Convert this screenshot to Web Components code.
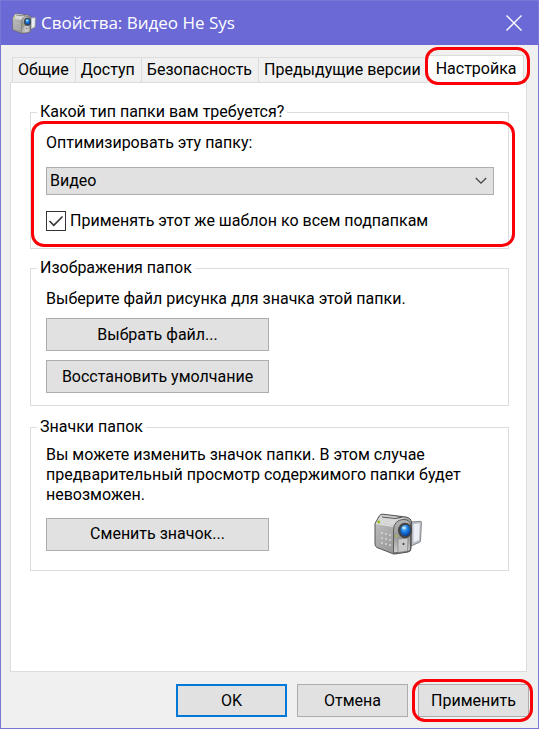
<!DOCTYPE html>
<html lang="ru">
<head>
<meta charset="utf-8">
<meta name="viewport" content="width=device-width, initial-scale=1">
<title>Свойства: Видео Не Sys</title>
<style>
  body {
    margin: 0;
    font: 16px/20px Roboto, "Liberation Sans", Arial, sans-serif;
    color: #000;
  }
  .actions {
    display: grid;
    grid-template-columns: 223px auto;
    justify-content: start;
    align-items: center;
    gap: 105px;
  }
  p {
    margin: 0;
  }
</style>
</head>
<body>

<props-window>
  <camcorder-icon slot="icon" size="24"></camcorder-icon>
  <span slot="title">Свойства: Видео Не Sys</span>

  <tab-strip slot="tabs">
    <tab-item>Общие</tab-item>
    <tab-item>Доступ</tab-item>
    <tab-item>Безопасность</tab-item>
    <tab-item>Предыдущие версии</tab-item>
    <tab-item selected>Настройка</tab-item>
  </tab-strip>

  <group-box label="Какой тип папки вам требуется?" ring>
    <combo-field label="Оптимизировать эту папку:" value="Видео"></combo-field>
    <check-field checked label="Применять этот же шаблон ко всем подпапкам"></check-field>
  </group-box>

  <group-box label="Изображения папок" class="images">
    <p>Выберите файл рисунка для значка этой папки.</p>
    <push-button wide>Выбрать файл...</push-button>
    <push-button wide>Восстановить умолчание</push-button>
  </group-box>

  <group-box label="Значки папок" class="icons">
    <p>Вы можете изменить значок папки. В этом случае предварительный просмотр содержимого папки будет невозможен.</p>
    <div class="actions">
      <push-button>Сменить значок...</push-button>
      <camcorder-icon size="48"></camcorder-icon>
    </div>
  </group-box>

  <push-button slot="footer" primary>OK</push-button>
  <push-button slot="footer">Отмена</push-button>
  <push-button slot="footer" ring>Применить</push-button>
</props-window>

<script>
// Small base class: every component only supplies its own markup
class BaseElement extends HTMLElement {
  connectedCallback() {
    if (this.shadowRoot) return;
    const shadow = this.attachShadow({ mode: 'open' });
    shadow.innerHTML = this.render();
    this.ready(shadow);
  }

  render() { return ''; }
  ready() {}
}

// Shared red highlight ring, drawn over the content
const ringStyle = `
  .ring {
    position: absolute;
    border: 3px solid #fb0007;
    border-radius: 13px;
    pointer-events: none;
    z-index: 2;
  }
`;

class PropsWindow extends BaseElement {
  render() {
    return `
      <style>
        :host {
          display: flex;
          flex-direction: column;
          box-sizing: border-box;
          min-height: 100vh;
          border: 1px solid #7a76d6;
          background: #f0f0f0;
        }
        header {
          display: flex;
          align-items: center;
          gap: 5px;
          height: 44px;
          padding: 0 14px 0 11px;
          background: #6b69d6;
          color: #fff;
        }
        h1 {
          flex: 1;
          margin: 0;
          font: 400 17px/24px "Open Sans", "Noto Sans", sans-serif;
        }
        .close {
          display: flex;
          padding: 0;
          border: 0;
          background: none;
          color: inherit;
        }
        main {
          flex: 1;
          display: flex;
          flex-direction: column;
          padding: 10px 11px 0 9px;
        }
        .panel {
          flex: 1;
          box-sizing: border-box;
          padding: 19px 17px 19px 19px;
          border: 1px solid #dcdcdc;
          background: #fff;
          display: flex;
          flex-direction: column;
          gap: 9px;
        }
        ::slotted(.icons) {
          margin-top: 2px;
        }
        footer {
          display: flex;
          justify-content: flex-end;
          gap: 10px;
          padding: 12px 9px 11px;
        }
        ::slotted([slot="footer"]) {
          width: 111px;
        }
      </style>
      <header>
        <slot name="icon"></slot>
        <h1><slot name="title"></slot></h1>
        <button class="close" aria-label="Закрыть">
          <svg width="20" height="20" viewBox="0 0 20 20" fill="none" stroke="currentColor" stroke-width="1.3">
            <path d="M2.5 2.5 17.500 17.500M17.500 2.500 2.500 17.500"/>
          </svg>
        </button>
      </header>
      <main>
        <slot name="tabs"></slot>
        <section class="panel"><slot></slot></section>
      </main>
      <footer><slot name="footer"></slot></footer>
    `;
  }
}

class TabStrip extends BaseElement {
  render() {
    return `
      <style>
        :host { display: block; }
        div {
          display: flex;
          align-items: flex-end;
          padding: 0 2px;
        }
      </style>
      <div role="tablist"><slot></slot></div>
    `;
  }
}

class TabItem extends BaseElement {
  render() {
    const selected = this.hasAttribute('selected');
    return `
      <style>
        ${ringStyle}
        :host {
          display: block;
          position: relative;
        }
        button {
          display: block;
          height: 25px;
          padding: 0 6px 0 5px;
          border: 1px solid #dcdcdc;
          border-width: 1px 0 0 1px;
          background: #f0f0f0;
          color: inherit;
          font: inherit;
          white-space: nowrap;
        }
        :host([selected]) {
          z-index: 1;
          margin-bottom: -1px;
        }
        :host([selected]) button {
          height: 28px;
          padding: 0 6px 2px 8px;
          border-right-width: 1px;
          background: #fff;
        }
        .ring { inset: -8px -6px -2px -2px; }
      </style>
      <button role="tab" aria-selected="${selected}"><slot></slot></button>
      ${selected ? '<div class="ring"></div>' : ''}
    `;
  }
}

class GroupBox extends BaseElement {
  render() {
    return `
      <style>
        ${ringStyle}
        :host {
          display: block;
          position: relative;
        }
        fieldset {
          min-width: 0;
          margin: 0;
          padding: 11px 14px 17px 15px;
          border: 1px solid #dcdcdc;
        }
        legend {
          margin-left: -9px;
          padding: 0 3px;
        }
        .content {
          display: flex;
          flex-direction: column;
          gap: 16px;
        }
        :host(.images) fieldset { padding-bottom: 12px; }
        :host(.images) .content { gap: 9px; }
        :host(.icons) fieldset { padding-top: 8px; padding-bottom: 15px; }
        :host(.icons) .content { gap: 8px; }
        .ring { inset: 19px -6px 2px 1px; }
      </style>
      <fieldset>
        <legend>${this.getAttribute('label')}</legend>
        <div class="content"><slot></slot></div>
      </fieldset>
      ${this.hasAttribute('ring') ? '<div class="ring"></div>' : ''}
    `;
  }
}

class ComboField extends BaseElement {
  render() {
    return `
      <style>
        :host {
          display: flex;
          flex-direction: column;
          gap: 14px;
        }
        .box {
          display: grid;
          align-items: center;
        }
        select, svg { grid-area: 1 / 1; }
        select {
          appearance: none;
          box-sizing: border-box;
          width: 100%;
          height: 28px;
          padding: 0 30px 0 3px;
          border: 1px solid #adadad;
          border-radius: 0;
          background: #e1e1e1;
          color: inherit;
          font: inherit;
        }
        svg {
          justify-self: end;
          margin-right: 7px;
          pointer-events: none;
        }
      </style>
      <label for="combo">${this.getAttribute('label')}</label>
      <div class="box">
        <select id="combo"><option>${this.getAttribute('value')}</option></select>
        <svg width="12" height="8" viewBox="0 0 12 8" fill="none" stroke="#444" stroke-width="1.3">
          <path d="M.8 1 6 6.200 11.200 1"/>
        </svg>
      </div>
    `;
  }
}

class CheckField extends BaseElement {
  render() {
    return `
      <style>
        :host { display: block; }
        label {
          display: flex;
          align-items: center;
          gap: 4px;
        }
        .box { display: grid; }
        input, svg { grid-area: 1 / 1; }
        input {
          appearance: none;
          box-sizing: border-box;
          width: 20px;
          height: 20px;
          margin: 0;
          border: 1px solid #333;
          background: #fff;
        }
        svg {
          visibility: hidden;
          pointer-events: none;
        }
        input:checked + svg { visibility: visible; }
      </style>
      <label for="check">
        <span class="box">
          <input type="checkbox" id="check">
          <svg width="20" height="20" viewBox="0 0 20 20" fill="none" stroke="#333" stroke-width="1.600">
            <path d="M3.500 10 7.800 14.300 16.500 5.500"/>
          </svg>
        </span>
        <span>${this.getAttribute('label')}</span>
      </label>
    `;
  }

  ready(shadow) {
    shadow.querySelector('input').checked = this.hasAttribute('checked');
  }
}

class PushButton extends BaseElement {
  render() {
    return `
      <style>
        ${ringStyle}
        :host {
          display: block;
          position: relative;
        }
        :host([wide]) { width: 223px; }
        button {
          display: block;
          box-sizing: border-box;
          width: 100%;
          height: 33px;
          padding: 0;
          border: 1px solid #adadad;
          background: #e1e1e1;
          color: inherit;
          font: inherit;
        }
        :host([primary]) button { border: 2px solid #0078d7; }
        .ring { inset: -5px -4px -5px -6px; }
      </style>
      <button><slot></slot></button>
      ${this.hasAttribute('ring') ? '<div class="ring"></div>' : ''}
    `;
  }
}

class CamcorderIcon extends BaseElement {
  render() {
    const size = Number(this.getAttribute('size')) || 48;
    return `
      <style>
        :host { display: block; }
        svg { display: block; }
      </style>
      <svg width="${size}" height="${size * 7 / 8}" viewBox="0 0 48 42" aria-hidden="true">
        <defs>
          <linearGradient id="side" x1="0" y1="0" x2="1" y2="1">
            <stop offset="0" stop-color="#c4c4c4"/>
            <stop offset="1" stop-color="#858585"/>
          </linearGradient>
          <linearGradient id="front" x1="0" y1="0" x2="0" y2="1">
            <stop offset="0" stop-color="#b4b4b4"/>
            <stop offset=".5" stop-color="#989898"/>
            <stop offset="1" stop-color="#d0d0d0"/>
          </linearGradient>
          <radialGradient id="lens" cx=".4" cy=".3" r=".7">
            <stop offset="0" stop-color="#7cc8ff"/>
            <stop offset=".5" stop-color="#197be0"/>
            <stop offset="1" stop-color="#073c93"/>
          </radialGradient>
        </defs>
        <!-- flip-out screen -->
        <path d="M36 9 46.500 8.300q1 0 1 1L46.500 28q0 1-1 1.300L37 33Z" fill="#b9bcc4" stroke="#777" stroke-width=".8"/>
        <path d="M39.500 11 45.800 10.300 45 27 39.500 29.500Z" fill="#eceef5"/>
        <!-- body -->
        <path d="M1 10.500 5.500 2.500Q6.500 1 9 1.200L32 4Q37 5 37.500 9L37 35.500Q37 38.500 34 39L21 41Q19 41.200 17 40L3 34.500Q1 33.500 1 31Z" fill="url(#side)" stroke="#555" stroke-width="1"/>
        <path d="M2 10 6.500 3Q7 2 9 2.200L31 5Q25 6.500 22 13Z" fill="#d8d8d8"/>
        <path d="M8 4 21 5.500 28 4.200" fill="none" stroke="#555" stroke-width="1.200"/>
        <path d="M2 10.500 19 13.500" fill="none" stroke="#e9e9e9"/>
        <path d="M19.500 40V17Q20 7 29 6.500 36.500 6.500 36.500 12V36Q36 38 34 38.400Z" fill="url(#front)" stroke="#555" stroke-width=".9"/>
        <path d="M24 26 34 25 33.500 38 24 39.500Z" fill="#c9c9c9" stroke="#777" stroke-width=".6"/>
        <circle cx="29.500" cy="31" r="1" fill="#333"/>
        <!-- speaker holes -->
        <g fill="#d6d6d6">
          <circle cx="8" cy="20" r="1"/><circle cx="12" cy="21" r="1"/><circle cx="16" cy="22" r="1"/>
          <circle cx="8" cy="25" r="1"/><circle cx="12" cy="26" r="1"/><circle cx="16" cy="27" r="1"/>
          <circle cx="8" cy="30" r="1"/><circle cx="12" cy="31" r="1"/><circle cx="16" cy="32" r="1"/>
        </g>
        <!-- lens and indicator lights -->
        <ellipse cx="31" cy="17.500" rx="7" ry="7.800" fill="#454545"/>
        <ellipse cx="31.400" cy="17.500" rx="5" ry="5.800" fill="url(#lens)"/>
        <ellipse cx="30" cy="14.800" rx="2" ry="1.400" fill="#b7e3ff"/>
        <circle cx="4.800" cy="9" r="1.400" fill="#92bd16"/>
        <circle cx="22.500" cy="23" r="1" fill="#a7cc20"/>
      </svg>
    `;
  }
}

customElements.define('props-window', PropsWindow);
customElements.define('tab-strip', TabStrip);
customElements.define('tab-item', TabItem);
customElements.define('group-box', GroupBox);
customElements.define('combo-field', ComboField);
customElements.define('check-field', CheckField);
customElements.define('push-button', PushButton);
customElements.define('camcorder-icon', CamcorderIcon);
</script>
</body>
</html>
